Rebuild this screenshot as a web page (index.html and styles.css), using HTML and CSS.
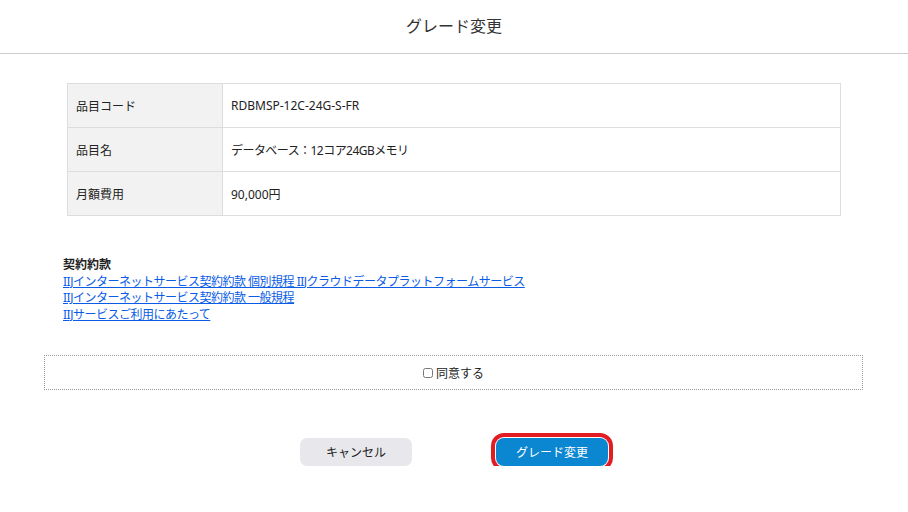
FILE: index.html
```html
<!DOCTYPE html>
<html lang="ja">
<head>
    <meta charset="UTF-8">
    <title>グレード変更</title>
    <link rel="stylesheet" href="styles.css">
</head>
<body>
    <!-- ヘッダー -->
    <header class="page-header">
        <h1>グレード変更</h1>
    </header>

    <main class="content">
        <!-- 品目情報 -->
        <table class="item-table">
            <tr>
                <th>品目コード</th>
                <td>RDBMSP-12C-24G-S-FR</td>
            </tr>
            <tr>
                <th>品目名</th>
                <td class="jp">データベース：12コア24GBメモリ</td>
            </tr>
            <tr>
                <th>月額費用</th>
                <td>90,000円</td>
            </tr>
        </table>

        <!-- 契約約款 -->
        <div class="terms">
            <h2>契約約款</h2>
            <a href="#">IIJインターネットサービス契約約款 個別規程 IIJクラウドデータプラットフォームサービス</a>
            <a href="#">IIJインターネットサービス契約約款 一般規程</a>
            <a href="#">IIJサービスご利用にあたって</a>
        </div>

        <div class="agree">
            <label><input type="checkbox"> 同意する</label>
        </div>

        <div class="actions">
            <button class="btn btn-cancel">キャンセル</button>
            <button class="btn btn-primary">グレード変更</button>
        </div>
    </main>
</body>
</html>
```

FILE: styles.css
```css
/* 全体 */
body {
    margin: 0;
    font-family: "Noto Sans", "Noto Sans CJK JP", sans-serif;
    font-size: 12px;
    color: #222;
    background-color: #fff;
}
.page-header {
    height: 53px;
    border-bottom: 1px solid #ccc;
    display: flex;
    align-items: center;
    justify-content: center;
}
.page-header h1 {
    margin: 0 0 4px;
    font-size: 16px;
    font-weight: normal;
    color: #333;
}
.content {
    padding: 29px 45px 0 44px;
}
/* 品目テーブル */
.item-table {
    width: 774px;
    margin-left: 23px;
    border-collapse: collapse;
}
.item-table th,
.item-table td {
    height: 43px;
    padding: 0 8px;
    border: 1px solid #ddd;
    text-align: left;
    font-weight: normal;
}
.item-table th {
    width: 138px;
    background-color: #f2f2f2;
}
.item-table .jp {
    letter-spacing: -0.55px;
}
/* 約款 */
.terms {
    margin: 41px 0 0 19px;
    line-height: 16.5px;
}
.terms h2 {
    margin: 0;
    font-size: 12px;
    font-weight: bold;
}
.terms a {
    display: block;
    width: max-content;
    color: #0a5ce6;
    letter-spacing: -0.5px;
}
.agree {
    margin-top: 32px;
    height: 33px;
    border: 1px dotted #999;
    display: flex;
    align-items: center;
    justify-content: center;
}
.agree label {
    display: flex;
    align-items: center;
    gap: 3px;
}
.agree input {
    margin: 0;
    width: 10px;
    height: 10px;
}
/* ボタン */
.actions {
    display: flex;
    justify-content: center;
    gap: 84px;
    margin-top: 48px;
    padding-left: 1px;
}
.btn {
    width: 112px;
    height: 28px;
    border: none;
    border-radius: 7px;
    font-family: inherit;
    font-size: 12px;
    cursor: pointer;
}
.btn-cancel {
    background-color: #e8e8ec;
    color: #222;
}
.btn-primary {
    background-color: #0b86d1;
    color: #fff;
    border-radius: 8px;
    box-shadow: 0 0 0 1px #fff, 0 0 0 5px #e31b23;
}
```
